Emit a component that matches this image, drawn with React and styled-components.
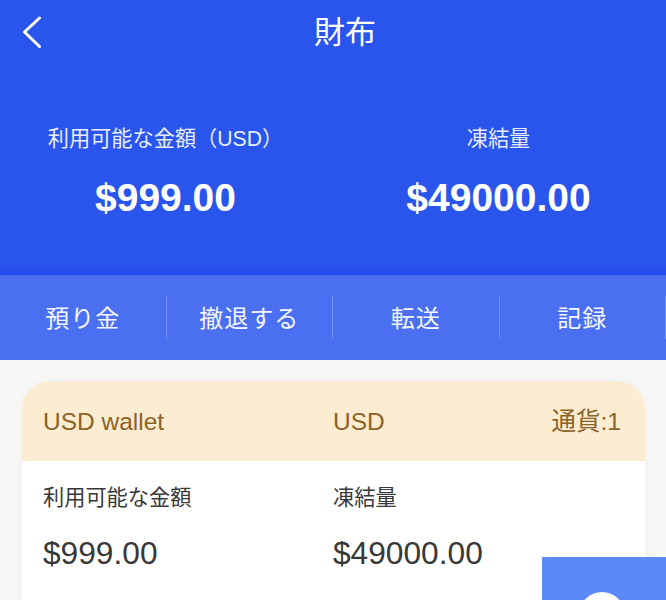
import React from "react";
import styled, { createGlobalStyle } from "styled-components";

const Global = createGlobalStyle`
  html, body { margin: 0; padding: 0; height: 600px; overflow: hidden; background: #f7f7f7; }
  body { font-family: "Liberation Sans", "Noto Sans CJK JP", sans-serif; }
`;
const Page = styled.div`
  position: relative;
  width: 666px;
  height: 600px;
  overflow: hidden;
  background: #f7f7f7;
`;
const Hero = styled.header`
  height: 275px;
  background: linear-gradient(#2a55ec 0, #2a55ec 262px, #2449ee 275px);
  color: #fff;
  display: flex;
  flex-direction: column;
`;
const NavBar = styled.div`
  height: 66px;
  display: flex;
  align-items: center;
  padding-left: 22px;
`;
const Back = styled.svg`
  width: 22px;
  height: 34px;
  flex: none;
  fill: none;
  stroke: #fff;
  stroke-width: 3;
  stroke-linecap: round;
  stroke-linejoin: round;
`;
const Title = styled.h1`
  flex: 1;
  margin: 0;
  padding-right: 20px;
  text-align: center;
  font-size: 31px;
  font-weight: 400;
  line-height: 40px;
`;
const Balances = styled.div`
  display: grid;
  grid-template-columns: 331px 335px;
  padding-top: 58px;
`;
const Balance = styled.div`
  display: flex;
  flex-direction: column;
  align-items: center;
`;
const BalanceLabel = styled.div`
  font-size: 21.2px;
  line-height: 30px;
  color: #e8edfd;
`;
const BalanceValue = styled.div`
  margin-top: 21px;
  font-size: 39px;
  line-height: 46px;
  font-weight: 700;
`;
const Tabs = styled.nav`
  height: 85px;
  background: #4a6ff0;
  display: grid;
  grid-template-columns: repeat(4, 166.5px);
  align-items: center;
`;
const Tab = styled.div`
  height: 43px;
  display: flex;
  align-items: center;
  justify-content: center;
  padding-bottom: 3px;
  color: #f4f6fe;
  font-size: 24px;
  letter-spacing: 1px;
  border-right: 1px solid #7390f4;
  box-sizing: border-box;
`;
const Body = styled.main`
  padding: 21px 21px 0 22px;
`;
const Card = styled.section`
  height: 260px;
  border-radius: 28px 28px 0 0;
  overflow: hidden;
  background: #fff;
  box-shadow: 0 0 12px rgba(0, 0, 0, 0.03);
`;
const Row = styled.div`
  display: grid;
  grid-template-columns: 290px 1fr auto;
  padding: 0 24px 0 21px;
`;
const CardHead = styled(Row)`
  height: 80px;
  padding-top: 2px;
  box-sizing: border-box;
  align-items: center;
  background: #fbecd2;
  color: #8d6226;
  font-size: 24.5px;
  line-height: 30px;
`;
const Stat = styled.div`
  display: flex;
  flex-direction: column;
  color: #383838;
`;
const StatLabel = styled.div`
  margin-top: 22px;
  font-size: 21.2px;
  line-height: 30px;
`;
const StatValue = styled.div`
  margin-top: 22px;
  font-size: 31.7px;
  line-height: 36px;
`;
const Fab = styled.div`
  position: absolute;
  left: 542px;
  top: 557px;
  width: 124px;
  height: 60px;
  background: #5b8af7;
  overflow: hidden;
`;
const FabDot = styled.span`
  position: absolute;
  left: 37px;
  top: 35px;
  width: 46px;
  height: 46px;
  border-radius: 50%;
  background: #fff;
`;

export default function App() {
  return (
    <Page>
      <Global />
      <Hero>
        <NavBar>
          <Back viewBox="0 0 22 34"><path d="M17.5 2 L2.5 16 L17.5 30.5" /></Back>
          <Title>財布</Title>
        </NavBar>
        <Balances>
          <Balance>
            <BalanceLabel>利用可能な金額（USD）</BalanceLabel>
            <BalanceValue>$999.00</BalanceValue>
          </Balance>
          <Balance>
            <BalanceLabel>凍結量</BalanceLabel>
            <BalanceValue>$49000.00</BalanceValue>
          </Balance>
        </Balances>
      </Hero>
      <Tabs>
        <Tab>預り金</Tab>
        <Tab>撤退する</Tab>
        <Tab>転送</Tab>
        <Tab>記録</Tab>
      </Tabs>
      <Body>
        <Card>
          <CardHead>
            <span>USD wallet</span>
            <span>USD</span>
            <span>通貨:1</span>
          </CardHead>
          <Row>
            <Stat>
              <StatLabel>利用可能な金額</StatLabel>
              <StatValue>$999.00</StatValue>
            </Stat>
            <Stat>
              <StatLabel>凍結量</StatLabel>
              <StatValue>$49000.00</StatValue>
            </Stat>
          </Row>
        </Card>
      </Body>
      <Fab><FabDot /></Fab>
    </Page>
  );
}
